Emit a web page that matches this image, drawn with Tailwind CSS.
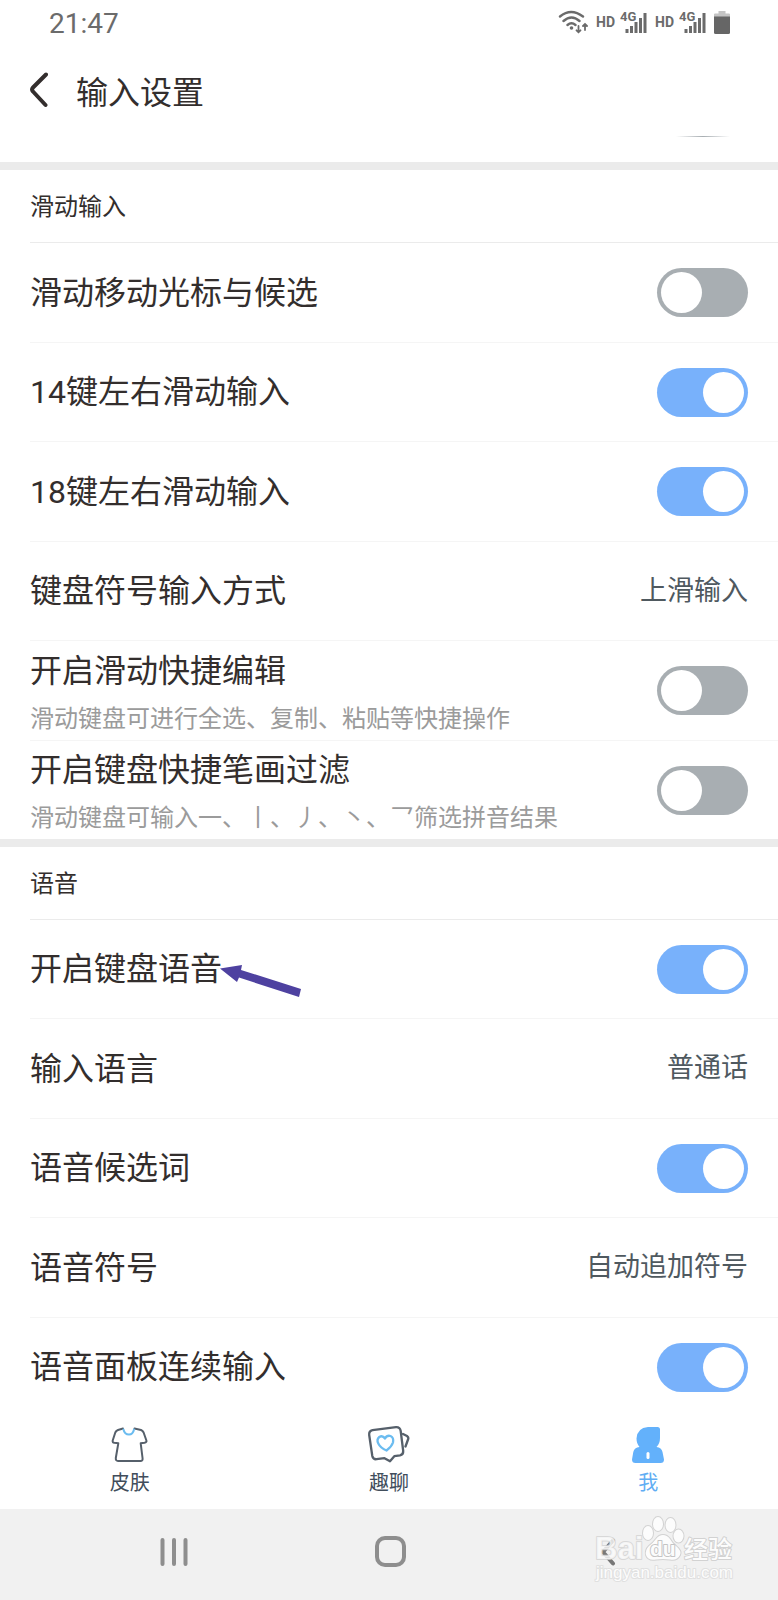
<!DOCTYPE html>
<html lang="zh-CN">
  <head>
    <meta charset="UTF-8" />
    <meta name="viewport" content="width=device-width, initial-scale=1.0" />
    <title>输入设置</title>
    <script src="https://cdn.jsdelivr.net/npm/@tailwindcss/browser@4"></script>
  </head>
  <body class="bg-white text-[#332e2d] font-[Roboto,'Noto_Sans_CJK_SC',sans-serif]">
    <div class="flex flex-col min-h-screen">
      <!-- status bar -->
      <div class="flex items-center justify-between h-12 pl-[49px] pr-12 text-[#6b6b6b]">
        <span class="text-[28px]">21:47</span>
        <div class="flex items-center gap-2 pb-1">
          <svg class="w-[30px] h-6" viewBox="0 0 30 24" fill="none" stroke="currentColor" stroke-width="2.4" stroke-linecap="round">
            <path d="M2 6.5Q13 -2.5 25 6.5M5.500 11Q13.500 4 21.500 11M9.500 15Q13.500 11.500 17.500 15" />
            <circle cx="13.500" cy="18" r="1.800" fill="currentColor" stroke="none" />
            <path stroke-width="1.800" d="M20.500 16V22M18.500 20.300L20.500 22.300L22.500 20.300M27 20V14.500M25 16L27 14L29 16" />
          </svg>
          <div class="flex items-center gap-[5px]">
            <span class="text-sm font-bold">HD</span>
            <svg class="w-[27px] h-6" viewBox="0 0 27 24" fill="currentColor">
              <text x="0" y="11" font-size="13" font-weight="700">4G</text>
              <path d="M5.500 19h3v4h-3zM10 16h3v7h-3zM14.500 12h3v11h-3zM19 8h3v15h-3zM23.500 3h3v20h-3z" />
            </svg>
          </div>
          <div class="flex items-center gap-[5px]">
            <span class="text-sm font-bold">HD</span>
            <svg class="w-[27px] h-6" viewBox="0 0 27 24" fill="currentColor">
              <text x="0" y="11" font-size="13" font-weight="700">4G</text>
              <path d="M5.500 19h3v4h-3zM10 16h3v7h-3zM14.500 12h3v11h-3zM19 8h3v15h-3zM23.500 3h3v20h-3z" />
            </svg>
          </div>
          <svg class="w-4 h-6" viewBox="0 0 16 24">
            <path fill="#c4c4c4" d="M4.500 1h7v2.500H15q1 0 1 1V7H0V4.500q0-1 1-1h3.500z" />
            <path fill="#666" d="M0 6.500h16V22.500q0 1.500-1.500 1.500h-13Q0 24 0 22.500z" />
          </svg>
        </div>
      </div>

      <header class="flex items-center h-[84px] px-7">
        <button type="button" aria-label="返回" class="mr-7">
          <svg class="w-5 h-9" viewBox="0 0 20 36" fill="none" stroke="#332e2d" stroke-width="4" stroke-linecap="round" stroke-linejoin="round">
            <path d="M18 2.500L5 15.500Q3 17.500 5 19.500L17.500 33" />
          </svg>
        </button>
        <h1 class="pt-1.5 text-[32px]">输入设置</h1>
      </header>

      <main class="flex-1">
        <!-- end of the row scrolled under the header -->
        <div class="flex justify-end h-[30px] pt-1 pr-12">
          <div class="w-[54px] h-px bg-linear-to-r from-white via-[#a8aeb2] to-white"></div>
        </div>

        <section class="border-t-8 border-[#ebebeb]">
          <h2 class="flex items-center h-[72px] px-[30px] pt-0.5 text-2xl">滑动输入</h2>
          <div class="pl-[30px]">
            <label class="flex items-center justify-between h-[100px] pr-[30px] border-t border-[#ebebeb] text-[32px]">
              滑动移动光标与候选
              <input type="checkbox" class="flex appearance-none w-[91px] h-[49px] p-1 rounded-full bg-[#a8aeb2] checked:bg-[#78b1fb] checked:justify-end before:size-[41px] before:rounded-full before:bg-white" />
            </label>
            <label class="flex items-center justify-between h-[99px] pr-[30px] border-t border-[#f5f5f5] text-[32px]">
              14键左右滑动输入
              <input type="checkbox" checked class="flex appearance-none w-[91px] h-[49px] p-1 rounded-full bg-[#a8aeb2] checked:bg-[#78b1fb] checked:justify-end before:size-[41px] before:rounded-full before:bg-white" />
            </label>
            <label class="flex items-center justify-between h-[100px] pr-[30px] border-t border-[#f5f5f5] text-[32px]">
              18键左右滑动输入
              <input type="checkbox" checked class="flex appearance-none w-[91px] h-[49px] p-1 rounded-full bg-[#a8aeb2] checked:bg-[#78b1fb] checked:justify-end before:size-[41px] before:rounded-full before:bg-white" />
            </label>
            <button type="button" class="flex items-center justify-between w-full h-[99px] pr-[30px] border-t border-[#f5f5f5] text-[32px]">
              键盘符号输入方式
              <span class="text-[27px] text-[#4f595f]">上滑输入</span>
            </button>
            <label class="flex items-center justify-between h-[100px] pr-[30px] border-t border-[#f5f5f5]">
              <span class="flex flex-col gap-2">
                <span class="text-[32px] leading-[48px]">开启滑动快捷编辑</span>
                <span class="text-2xl leading-8 text-[#9b9b9b]">滑动键盘可进行全选、复制、粘贴等快捷操作</span>
              </span>
              <input type="checkbox" class="flex appearance-none w-[91px] h-[49px] p-1 rounded-full bg-[#a8aeb2] checked:bg-[#78b1fb] checked:justify-end before:size-[41px] before:rounded-full before:bg-white" />
            </label>
            <label class="flex items-center justify-between h-[99px] pr-[30px] border-t border-[#f5f5f5]">
              <span class="flex flex-col gap-2">
                <span class="text-[32px] leading-[48px]">开启键盘快捷笔画过滤</span>
                <span class="text-2xl leading-8 text-[#9b9b9b]">滑动键盘可输入一、丨、丿、丶、乛筛选拼音结果</span>
              </span>
              <input type="checkbox" class="flex appearance-none w-[91px] h-[49px] p-1 rounded-full bg-[#a8aeb2] checked:bg-[#78b1fb] checked:justify-end before:size-[41px] before:rounded-full before:bg-white" />
            </label>
          </div>
        </section>

        <section class="border-t-8 border-[#ebebeb]">
          <h2 class="flex items-center h-[72px] px-[30px] pt-0.5 text-2xl">语音</h2>
          <div class="pl-[30px]">
            <label class="relative flex items-center justify-between h-[99px] pr-[30px] border-t border-[#ebebeb] text-[32px]">
              开启键盘语音
              <input type="checkbox" checked class="flex appearance-none w-[91px] h-[49px] p-1 rounded-full bg-[#a8aeb2] checked:bg-[#78b1fb] checked:justify-end before:size-[41px] before:rounded-full before:bg-white" />
              <!-- pointer arrow -->
              <svg class="absolute left-[190px] top-11 w-[82px] h-[34px]" viewBox="0 0 82 34" fill="#4e41a0">
                <path d="M0 4.500L22 1L21 6L81 25L79 33L19 13.500L17 18z" />
              </svg>
            </label>
            <button type="button" class="flex items-center justify-between w-full h-[100px] pr-[30px] border-t border-[#f5f5f5] text-[32px]">
              输入语言
              <span class="text-[27px] text-[#4f595f]">普通话</span>
            </button>
            <label class="flex items-center justify-between h-[99px] pr-[30px] border-t border-[#f5f5f5] text-[32px]">
              语音候选词
              <input type="checkbox" checked class="flex appearance-none w-[91px] h-[49px] p-1 rounded-full bg-[#a8aeb2] checked:bg-[#78b1fb] checked:justify-end before:size-[41px] before:rounded-full before:bg-white" />
            </label>
            <button type="button" class="flex items-center justify-between w-full h-[100px] pr-[30px] border-t border-[#f5f5f5] text-[32px]">
              语音符号
              <span class="text-[27px] text-[#4f595f]">自动追加符号</span>
            </button>
            <label class="flex items-center justify-between h-[99px] pr-[30px] border-t border-[#f5f5f5] text-[32px]">
              语音面板连续输入
              <input type="checkbox" checked class="flex appearance-none w-[91px] h-[49px] p-1 rounded-full bg-[#a8aeb2] checked:bg-[#78b1fb] checked:justify-end before:size-[41px] before:rounded-full before:bg-white" />
            </label>
          </div>
        </section>
      </main>

      <!-- tabs -->
      <nav class="grid grid-cols-3 h-[92px] pt-2 text-xl text-[#414d5b]">
        <a href="#skin" class="flex flex-col items-center gap-1.5">
          <svg class="w-[37px] h-[38px]" viewBox="0 0 37 38" fill="none" stroke="#56606b" stroke-width="2" stroke-linecap="round" stroke-linejoin="round">
            <path d="M12 3.500L7 5Q5 5.800 4.300 7.500L1.700 15.500Q1.300 17.500 3.300 17.800L7.300 18.300L4.800 33Q4.600 36 7 36H29.500Q31.800 36 31.600 33.500L29.700 18.300L33.500 17.800Q36 17.300 35.400 15.500L32.600 7.500Q31.800 5.800 30 5L23.500 3.500" />
            <path stroke="#6bbcf0" d="M12.500 4.500Q13.500 9.500 18 9.500Q22 9.500 23 4.500" />
          </svg>
          皮肤
        </a>
        <a href="#chat" class="flex flex-col items-center gap-1.5">
          <svg class="w-[43px] h-[38px]" viewBox="0 0 43 38" fill="none" stroke="#56606b" stroke-width="2.300" stroke-linecap="round" stroke-linejoin="round">
            <path d="M5.500 5.200L29 2.200Q33 2 33.700 6L36.200 26Q36.500 29.500 33 30.300L27.300 31.200L23 36.300L17.500 33.200L9.500 34.200Q6 34.500 5.300 31L2.200 10Q1.800 6 5.500 5.200z" />
            <path d="M36 9L40 11Q41.800 12.300 41.200 14L38.500 21.500" />
            <path stroke="#6bbcf0" d="M18 13.500Q15.500 10 12.300 12Q9.300 14.500 11.300 18.500Q13.500 23 19.500 25.500Q24.500 22 26 17.500Q27 12.500 23.500 11Q20 10 18 13.500z" />
          </svg>
          趣聊
        </a>
        <a href="#me" class="flex flex-col items-center gap-1.5 text-[#60adf3]">
          <svg class="w-8 h-[38px]" viewBox="0 0 32 38" fill="#63b1fb">
            <path d="M16 2H25.500Q28 2 28 4.500V13Q28 18.500 24.500 22Q29.500 22.500 30.500 27L32 34.500Q32 38 28.500 38H3.500Q0 38 0 34.500L1.300 27Q2.300 22.500 7.500 22Q4.500 18.500 4.500 13.500Q5 3 16 2z" />
            <rect x="14.500" y="27" width="3" height="7" rx="1.500" fill="#fff" />
          </svg>
          我
        </a>
      </nav>

      <!-- system navigation -->
      <div class="relative grid grid-cols-3 h-[91px] pl-[66px] pr-[62px] pb-1.5 bg-[#f1f1f1]">
        <button type="button" aria-label="最近任务" class="flex items-center justify-center">
          <svg class="w-7 h-[30px]" viewBox="0 0 28 30" stroke="#8e8e8e" stroke-width="4" stroke-linecap="round">
            <path d="M2.500 3V27M14 3V27M25.500 3V27" />
          </svg>
        </button>
        <button type="button" aria-label="主屏幕" class="flex items-center justify-center">
          <span class="size-[31px] rounded-[10px] border-4 border-[#8e8e8e]"></span>
        </button>
        <button type="button" aria-label="返回上一页" class="flex items-center justify-center">
          <svg class="w-4 h-7" viewBox="0 0 16 28" fill="none" stroke="#777" stroke-width="4" stroke-linecap="round" stroke-linejoin="round">
            <path d="M13 2.500L3 14L13 25.500" />
          </svg>
        </button>
        <!-- watermark -->
        <svg class="absolute right-10 top-1 w-[144px] h-[72px]" viewBox="0 0 144 72" fill="#fcfcfc" stroke="#d2d2d2" stroke-width="2" stroke-linejoin="round" paint-order="stroke" font-family="'Liberation Sans','Noto Sans CJK SC',sans-serif">
          <text x="1" y="46" font-size="31" font-weight="700" fill-opacity="0.800" stroke-opacity="0.800">Bai</text>
          <ellipse cx="54" cy="20" rx="5" ry="7" />
          <ellipse cx="64" cy="11" rx="5" ry="7" />
          <ellipse cx="76.500" cy="12" rx="5" ry="7" />
          <ellipse cx="84.500" cy="23" rx="5" ry="6.500" />
          <path d="M69 22Q73 22 76 26Q78 30 82 33Q88 38 86 42Q83 48 76 46.500Q69 45.500 62 46.500Q54 48 52 42Q51 37 55 33Q59 30 62 26Q65 22 69 22z" />
          <text x="56" y="43" font-size="21" font-weight="700" stroke="#c4c4c4">du</text>
          <text x="90" y="45" font-size="24" font-weight="500">经验</text>
          <text x="2" y="65" font-size="17" stroke="#e0e0e0">jingyan.baidu.com</text>
        </svg>
      </div>
    </div>
  </body>
</html>
